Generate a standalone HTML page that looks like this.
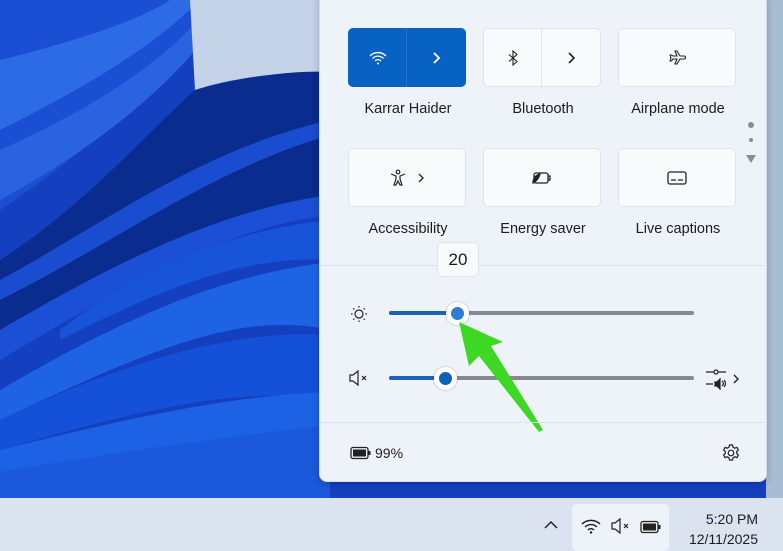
<!DOCTYPE html>
<html><head><style>
*{margin:0;padding:0;box-sizing:border-box}
body{width:783px;height:551px;overflow:hidden;position:relative;font-family:"Liberation Sans",sans-serif;background:#1646c9}
.panel{position:absolute;left:319px;top:-8px;width:448px;height:490px;background:#eef2f9;border-radius:8px;border:1px solid #d5dbe6;box-shadow:0 2px 8px rgba(0,0,0,.2)}
.tile{position:absolute;width:118px;height:59px;background:#f9fafc;border-radius:5px;border:1px solid #e0e4ea;display:flex;align-items:center;justify-content:center}
.lbl{position:absolute;width:140px;text-align:center;font-size:14.5px;color:#1b1b1b}
.tb{position:absolute;left:0;top:498px;width:783px;height:53px;background:#dbe3f1}
svg{display:block}
</style></head><body>
<svg style="position:absolute;left:0;top:0" width="783" height="498">
<rect width="783" height="498" fill="#1440bf"/>
<path d="M0 0 L230 0 C180 70 90 150 0 210 Z" fill="#1a4fd4"/>
<path d="M0 60 C80 40 140 20 170 0 L200 0 C150 50 80 90 0 130Z" fill="#2d6ae6"/>
<path d="M0 150 C90 110 170 60 215 0 L232 0 C190 70 110 140 0 200Z" fill="#2a62e0"/>
<path d="M190 0 L330 0 L330 72 C270 72 225 80 195 90 Z" fill="#c3d2e6"/>
<path d="M195 90 C250 75 300 70 330 72 L330 210 C240 210 140 260 0 340 L0 260 C80 210 150 130 195 90Z" fill="#0a2c8e"/>
<path d="M0 280 C110 220 200 150 330 120 L330 135 C210 170 120 240 0 300Z" fill="#1a4cd0"/>
<path d="M0 330 C120 260 220 210 330 195 L330 215 C240 225 150 270 0 360Z" fill="#1b4fd6"/>
<path d="M60 330 C150 260 240 230 330 220 L330 260 C240 255 160 290 60 340Z" fill="#1854d8"/>
<path d="M0 390 C120 320 220 275 330 262 L330 330 C240 310 150 350 0 420Z" fill="#1e63e4"/>
<path d="M0 420 C150 350 250 330 330 335 L330 400 C240 385 140 410 0 450Z" fill="#1550d8"/>
<path d="M0 450 C120 420 230 395 330 392 L330 498 L0 498Z" fill="#1d62e4"/>
<path d="M0 472 C100 455 200 440 330 425 L330 498 L0 498Z" fill="#1a58dc"/>
<rect x="766" y="0" width="17" height="498" fill="#a8bcd4"/>
</svg>
<div class="panel"></div>
<div class="tile" style="left:348px;top:28px;background:#0862c4;border-color:#0862c4;justify-content:flex-start">
 <div style="width:59px;height:59px;display:flex;align-items:center;justify-content:center;border-right:1px solid #2a74c8"><svg width="18" height="14" viewBox="0 0 18 14" fill="none" stroke="#fff" stroke-width="1.3"><path d="M1 5a11 11 0 0 1 16 0M3.5 7.5a7.5 7.5 0 0 1 11 0M6 10a4 4 0 0 1 6 0"/><circle cx="9" cy="12.5" r="1" fill="#fff" stroke="none"/></svg></div>
 <div style="width:59px;display:flex;justify-content:center"><svg width="10" height="14" viewBox="0 0 10 14" fill="none" stroke="#fff" stroke-width="1.8"><path d="M3 2l5 5-5 5"/></svg></div>
</div>
<div class="tile" style="left:483px;top:28px;justify-content:flex-start">
 <div style="width:59px;height:57px;display:flex;align-items:center;justify-content:center;border-right:1px solid #e0e4ea"><svg width="10" height="16" viewBox="0 0 10 16" fill="none" stroke="#222" stroke-width="1.1"><path d="M1 4.5l8 7-4 3.5V1l4 3.5-8 7"/></svg></div>
 <div style="width:59px;display:flex;justify-content:center"><svg width="10" height="14" viewBox="0 0 10 14" fill="none" stroke="#222" stroke-width="1.6"><path d="M3 2l5 5-5 5"/></svg></div>
</div>
<div class="tile" style="left:618px;top:28px"><svg width="20" height="20" viewBox="0 0 20 20" fill="none" stroke="#222" stroke-width="1.1"><path d="M8 3h2l3 5h4a1.5 1.5 0 0 1 0 3h-4l-3 5H8l2-5H6l-1.5 2H3l1-3-1-3h1.5L6 8h4z"/></svg></div>
<div class="lbl" style="left:338px;top:101px">Karrar Haider</div>
<div class="lbl" style="left:473px;top:101px">Bluetooth</div>
<div class="lbl" style="left:608px;top:101px">Airplane mode</div>
<div style="position:absolute;left:748px;top:122px;width:6px;height:6px;border-radius:50%;background:#8a8e94"></div>
<div style="position:absolute;left:749px;top:138px;width:4px;height:4px;border-radius:50%;background:#8a8e94"></div>
<div style="position:absolute;left:746px;top:155px;width:0;height:0;border-left:5px solid transparent;border-right:5px solid transparent;border-top:8px solid #8a8e94"></div>
<div class="tile" style="left:348px;top:148px"><svg width="18" height="18" viewBox="0 0 18 18" fill="none" stroke="#222" stroke-width="1.2"><circle cx="9" cy="3" r="1.8"/><path d="M2 5l5 2v3l-2 6h2l2-4 2 4h2l-2-6V7l5-2"/></svg><svg style="margin-left:10px" width="8" height="12" viewBox="0 0 8 12" fill="none" stroke="#222" stroke-width="1.3"><path d="M2 2l4 4-4 4"/></svg></div>
<div class="tile" style="left:483px;top:148px"><svg width="22" height="16" viewBox="0 0 22 16" fill="none" stroke="#222" stroke-width="1.3"><rect x="3" y="3" width="14" height="10" rx="2"/><path d="M17 6h2v4h-2"/><path d="M2 13c0-5 3-8 7-9-1 4-3 7-7 9z" fill="#222"/></svg></div>
<div class="tile" style="left:618px;top:148px"><svg width="22" height="16" viewBox="0 0 22 16" fill="none" stroke="#222" stroke-width="1.3"><rect x="2" y="2" width="18" height="12" rx="2"/><path d="M5 10h5M12 10h5"/></svg></div>
<div class="lbl" style="left:338px;top:221px">Accessibility</div>
<div class="lbl" style="left:473px;top:221px">Energy saver</div>
<div class="lbl" style="left:608px;top:221px">Live captions</div>
<div style="position:absolute;left:320px;top:265px;width:446px;height:1px;background:#dde2ea"></div>
<div style="position:absolute;left:437px;top:242px;width:42px;height:35px;background:#f9fafc;border:1px solid #e0e4ea;border-radius:5px;font-size:17px;text-align:center;line-height:33px;color:#1b1b1b">20</div>
<svg style="position:absolute;left:349px;top:304px" width="20" height="20" viewBox="0 0 20 20" fill="none" stroke="#222" stroke-width="1.2"><circle cx="10" cy="10" r="4"/><path d="M10 2v1.5M10 16.5V18M2 10h1.5M16.5 10H18M4.3 4.3l1 1M14.7 14.7l1 1M4.3 15.7l1-1M14.7 5.3l1-1"/></svg>
<div style="position:absolute;left:389px;top:311px;width:305px;height:4px;border-radius:2px;background:#858a90"></div>
<div style="position:absolute;left:389px;top:311px;width:70px;height:4px;border-radius:2px;background:#1a63bd"></div>
<div style="position:absolute;left:446px;top:302px;width:23px;height:23px;border-radius:50%;background:#fff;box-shadow:0 0 2px rgba(0,0,0,.3)"><div style="margin:5px;width:13px;height:13px;border-radius:50%;background:#2f7fd0"></div></div>
<svg style="position:absolute;left:348px;top:369px" width="22" height="18" viewBox="0 0 22 18" fill="none" stroke="#222" stroke-width="1.2"><path d="M2 6h3l5-4v14l-5-4H2z"/><path d="M14 7l4 4M18 7l-4 4"/></svg>
<div style="position:absolute;left:389px;top:376px;width:305px;height:4px;border-radius:2px;background:#858a90"></div>
<div style="position:absolute;left:389px;top:376px;width:56px;height:4px;border-radius:2px;background:#1a63bd"></div>
<div style="position:absolute;left:434px;top:367px;width:23px;height:23px;border-radius:50%;background:#fff;box-shadow:0 0 2px rgba(0,0,0,.3)"><div style="margin:5px;width:13px;height:13px;border-radius:50%;background:#0d5fb8"></div></div>
<svg style="position:absolute;left:705px;top:368px" width="36" height="22" viewBox="0 0 36 22" fill="none" stroke="#222" stroke-width="1.2"><path d="M1 4h8M13 4h8M1 16h7"/><circle cx="11" cy="4" r="2"/><path d="M10 14h2l3-3v10l-3-3h-2z" fill="#222"/><path d="M17 13a3 3 0 0 1 0 5M19 12a5 5 0 0 1 0 7"/><path d="M29 7l4 4-4 4" stroke-width="1.4"/></svg>
<svg style="position:absolute;left:455px;top:320px" width="95" height="115" viewBox="0 0 95 115"><path d="M4 2 L48 22 L36 26 L88 110 L84 112 L24 36 L14 46 Z" fill="#3ed824"/></svg>
<div style="position:absolute;left:320px;top:422px;width:446px;height:1px;background:#dde2ea"></div>
<svg style="position:absolute;left:350px;top:446px" width="22" height="14" viewBox="0 0 22 14"><rect x="1" y="1.5" width="17" height="11" rx="2" fill="none" stroke="#222" stroke-width="1.3"/><rect x="3" y="3.5" width="13" height="7" fill="#222"/><rect x="18.5" y="5" width="2" height="4" fill="#222"/></svg>
<div style="position:absolute;left:375px;top:445px;font-size:14px;color:#1b1b1b">99%</div>
<svg style="position:absolute;left:721px;top:443px" width="20" height="20" viewBox="0 0 20 20" fill="none" stroke="#222" stroke-width="1.2"><circle cx="10" cy="10" r="2.8"/><path d="M8.5 2h3l.5 2.2 1.8 1 2.1-.8 1.5 2.6-1.7 1.5v2l1.7 1.5-1.5 2.6-2.1-.8-1.8 1-.5 2.2h-3l-.5-2.2-1.8-1-2.1.8-1.5-2.6 1.7-1.5v-2L2.6 7l1.5-2.6 2.1.8 1.8-1z"/></svg>
<div class="tb"></div>
<svg style="position:absolute;left:543px;top:520px" width="16" height="10" viewBox="0 0 16 10" fill="none" stroke="#222" stroke-width="1.5"><path d="M2 8l6-6 6 6"/></svg>
<div style="position:absolute;left:572px;top:504px;width:97px;height:47px;background:#eef2f9;border-radius:5px"></div>
<svg style="position:absolute;left:581px;top:518px" width="20" height="16" viewBox="0 0 20 16" fill="none" stroke="#222" stroke-width="1.4"><path d="M1 6a13 13 0 0 1 18 0M4 9a8.5 8.5 0 0 1 12 0M7 12a4 4 0 0 1 6 0"/><circle cx="10" cy="14.5" r="1.2" fill="#222" stroke="none"/></svg>
<svg style="position:absolute;left:610px;top:518px" width="22" height="16" viewBox="0 0 22 16" fill="none" stroke="#222" stroke-width="1.2"><path d="M2 5h3l5-4v14l-5-4H2z"/><path d="M14 6l4 4M18 6l-4 4"/></svg>
<svg style="position:absolute;left:640px;top:520px" width="22" height="14" viewBox="0 0 22 14"><rect x="1" y="1.5" width="17" height="11" rx="2" fill="none" stroke="#222" stroke-width="1.3"/><rect x="3" y="3.5" width="13" height="7" fill="#222"/><rect x="18.5" y="5" width="2" height="4" fill="#222"/></svg>
<div style="position:absolute;left:660px;top:509px;width:98px;text-align:right;font-size:14px;line-height:20px;color:#1b1b1b">5:20 PM<br>12/11/2025</div>
</body></html>
